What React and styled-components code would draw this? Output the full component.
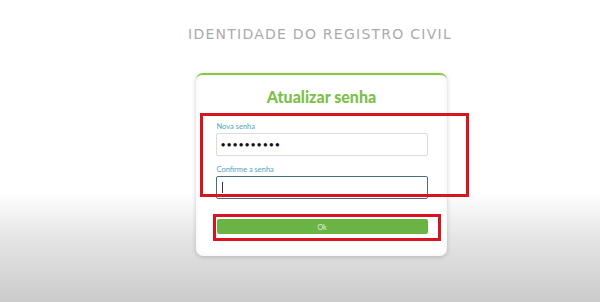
import styled, { createGlobalStyle } from "styled-components";

const GlobalStyle = createGlobalStyle`
  html, body {
    margin: 0;
    padding: 0;
  }
  body {
    font-family: "Lato", "Liberation Sans", sans-serif;
  }
`;

const Page = styled.div`
  width: 600px;
  height: 302px;
  box-sizing: border-box;
  padding-left: 40px;
  overflow: hidden;
  display: flex;
  flex-direction: column;
  align-items: center;
  background: linear-gradient(
    to bottom,
    #ffffff 0px,
    #ffffff 192px,
    #e4e4e4 240px,
    #cbcbcb 302px
  );
`;

const Brand = styled.h1`
  margin: 26px 0 0 0;
  height: 17px;
  line-height: 17px;
  font-family: "DejaVu Sans", "Liberation Sans", sans-serif;
  font-weight: 400;
  font-size: 14px;
  letter-spacing: 1.25px;
  color: #ababab;
`;

const Stage = styled.div`
  position: relative;
  margin-top: 30px;
  margin-left: 2px;
`;

const Card = styled.form`
  width: 251px;
  box-sizing: border-box;
  padding: 12px 19px 22px 20px;
  background: #fff;
  border-top: 2px solid #8cc63f;
  border-radius: 7px;
  box-shadow: 0 1px 5px rgba(0, 0, 0, 0.18), inset 0 0 6px rgba(0, 0, 0, 0.05);
  display: flex;
  flex-direction: column;
`;

const Title = styled.h2`
  margin: 0 0 15px 0;
  height: 20px;
  line-height: 20px;
  text-align: center;
  font-family: "Lato", "Liberation Sans", sans-serif;
  font-weight: 900;
  font-size: 16px;
  color: #7cc04a;
`;

const Label = styled.label`
  display: block;
  height: 10px;
  line-height: 10px;
  font-size: 7.5px;
  color: #4fa6b8;
  margin: ${({ $first }) => ($first ? "0" : "9px")} 0 1px 1px;
`;

const Input = styled.div`
  box-sizing: border-box;
  height: 23px;
  border: 1px solid ${({ $focused }) => ($focused ? "#4a6a8a" : "#dcdcdc")};
  border-radius: 2px;
  background: #fff;
  display: flex;
  align-items: center;
  padding-left: 4px;
  font-size: 9px;
  letter-spacing: 0.8px;
  color: #111;
`;

const Caret = styled.span`
  display: block;
  width: 1px;
  height: 11px;
  background: #333;
  margin-left: 1px;
`;

const Button = styled.button`
  margin-top: 20px;
  margin-left: 1px;
  height: 15px;
  border: none;
  border-radius: 2px;
  background: #6ab445;
  color: #e6f3dc;
  font-family: "Lato", "Liberation Sans", sans-serif;
  font-size: 7px;
  padding: 0;
`;

const Mark = styled.div`
  position: absolute;
  box-sizing: border-box;
  border: 3px solid #d7141f;
  left: ${({ $x }) => $x}px;
  top: ${({ $y }) => $y}px;
  width: ${({ $w }) => $w}px;
  height: ${({ $h }) => $h}px;
  pointer-events: none;
`;

const App = () => {
  return (
    <Page>
      <GlobalStyle />
      <Brand>IDENTIDADE DO REGISTRO CIVIL</Brand>
      <Stage>
        <Card onSubmit={(e) => e.preventDefault()}>
          <Title>Atualizar senha</Title>
          <Label $first>Nova senha</Label>
          <Input>••••••••••</Input>
          <Label>Confirme a senha</Label>
          <Input $focused>
            <Caret />
          </Input>
          <Button type="submit">Ok</Button>
        </Card>
        <Mark $x={4} $y={40} $w={269} $h={84} />
        <Mark $x={17} $y={141} $w={228} $h={27} />
      </Stage>
    </Page>
  );
};

export default App;
